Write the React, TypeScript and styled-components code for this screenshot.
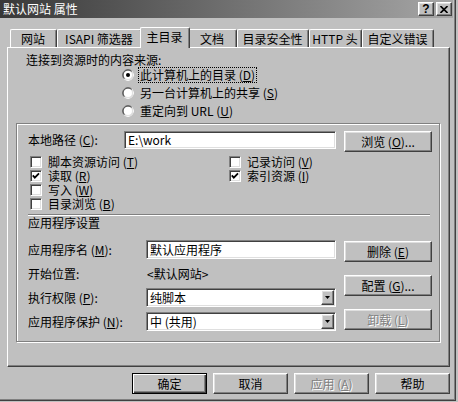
import React from 'react';
import styled, { createGlobalStyle, css } from 'styled-components';

const GlobalStyle = createGlobalStyle`
  * { box-sizing: border-box; }
  html, body { margin: 0; padding: 0; background: #c0c0c0; }
  body {
    font-family: "Noto Sans CJK SC", "Noto Sans", sans-serif;
    font-size: 12px;
    line-height: 14px;
    color: #000;
  }
  u { text-decoration-thickness: 1px; text-underline-offset: 1px; }
`;

const raised = css`
  border: 1px solid;
  border-color: #fff #404040 #404040 #fff;
  box-shadow: inset -1px -1px 0 #808080, inset 1px 1px 0 #dfdfdf;
`;

const sunken = css`
  border: 1px solid;
  border-color: #808080 #fff #fff #808080;
  box-shadow: inset 1px 1px 0 #404040, inset -1px -1px 0 #dfdfdf;
`;

const Window = styled.div`
  width: 456px;
  height: 401px;
  padding-right: 2px;
  background: #c0c0c0;
  border-right: 1px solid #404040;
  border-bottom: 1px solid #404040;
  box-shadow: inset -1px -1px 0 #808080;
  display: flex;
  flex-direction: column;
`;

const TitleBar = styled.div`
  height: 18px;
  padding: 0 1px 0 3px;
  display: flex;
  align-items: center;
  justify-content: space-between;
  background: linear-gradient(to right, #383838, #a6a6a6);
`;

const Title = styled.span`
  color: #fff;
  line-height: 18px;
`;

const CaptionButtons = styled.div`
  display: flex;
  gap: 2px;
`;

const CaptionButton = styled.div`
  ${raised};
  width: 16px;
  height: 14px;
  background: #c0c0c0;
  display: flex;
  align-items: center;
  justify-content: center;
  font-family: "Liberation Sans", sans-serif;
  font-weight: bold;
  font-size: 12px;
  line-height: 12px;
`;

const Body = styled.div`
  padding: 9px 0 0 7px;
  display: flex;
  flex-direction: column;
`;

const TabStrip = styled.div`
  height: 20px;
  padding-left: 3px;
  display: flex;
  align-items: flex-end;
`;

const Tab = styled.div<{ $width: number; $active?: boolean }>`
  position: relative;
  width: ${(p) => p.$width + (p.$active ? 4 : 0)}px;
  height: ${(p) => (p.$active ? 21 : 18)}px;
  margin: 0 ${(p) => (p.$active ? -2 : 0)}px ${(p) => (p.$active ? -1 : 0)}px;
  padding: 0 1px ${(p) => (p.$active ? 3 : 0)}px 0;
  z-index: ${(p) => (p.$active ? 1 : 0)};
  display: flex;
  align-items: center;
  justify-content: center;
  white-space: nowrap;
  background: #c0c0c0;
  border-left: 1px solid #fff;
  border-top: 1px solid #fff;
  border-right: 1px solid #404040;
  border-radius: 2px 2px 0 0;
  box-shadow: inset -1px 0 0 #808080;
`;

const Panel = styled.div`
  width: 443px;
  height: 320px;
  padding: 5px 0 0 8px;
  border: 1px solid;
  border-color: #fff #404040 #404040 #fff;
  box-shadow: inset -1px -1px 0 #808080;
  display: flex;
  flex-direction: column;
`;

const Heading = styled.div`
  margin-left: 10px;
  height: 13px;
  line-height: 13px;
`;

const RadioList = styled.div`
  margin-left: 106px;
  display: flex;
  flex-direction: column;
`;

const OptionRow = styled.div`
  height: 18px;
  display: flex;
  align-items: center;
  gap: 4px;
  white-space: nowrap;
`;

const FocusLabel = styled.span<{ $focus?: boolean }>`
  padding: 0 1px;
  line-height: 14px;
  border: 1px dotted ${(p) => (p.$focus ? '#000' : 'transparent')};
`;

const Frame = styled.div`
  margin-top: 3px;
  width: 424px;
  height: 219px;
  padding: 7px 7px 0 11px;
  border: 1px solid #808080;
  box-shadow: inset 1px 1px 0 #fff, 1px 1px 0 #fff;
  display: flex;
  flex-direction: column;
`;

const PathRow = styled.div`
  display: flex;
  align-items: flex-start;
  gap: 8px;
`;

const FieldLabel = styled.span<{ $w: number }>`
  width: ${(p) => p.$w}px;
  flex: none;
  white-space: nowrap;
`;

const PathLabel = styled(FieldLabel)`
  height: 18px;
  line-height: 18px;
  margin-right: -8px;
`;

const TextBox = styled.div<{ $w: number; $h: number }>`
  ${sunken};
  width: ${(p) => p.$w}px;
  height: ${(p) => p.$h}px;
  background: #fff;
  padding-left: 3px;
  display: flex;
  align-items: center;
  white-space: nowrap;
`;

const Button = styled.div<{ $w: number; $disabled?: boolean }>`
  ${raised};
  width: ${(p) => p.$w}px;
  height: 21px;
  flex: none;
  background: #c0c0c0;
  display: flex;
  align-items: center;
  justify-content: center;
  white-space: nowrap;
  color: ${(p) => (p.$disabled ? '#808080' : '#000')};
  text-shadow: ${(p) => (p.$disabled ? '1px 1px 0 #fff' : 'none')};
`;

const DefaultButton = styled(Button)`
  border-color: #000;
  box-shadow: inset 1px 1px 0 #fff, inset -1px -1px 0 #404040, inset -2px -2px 0 #808080;
`;

const CheckGrid = styled.div`
  margin-top: 3px;
  padding-left: 2px;
  display: grid;
  grid-template-columns: 199px auto;
  grid-auto-rows: 14px;
`;

const CheckCell = styled.div`
  display: flex;
  align-items: center;
  gap: 6px;
  white-space: nowrap;
  line-height: 14px;
`;

const Box = styled.div`
  ${sunken};
  width: 12px;
  height: 12px;
  background: #fff;
  display: flex;
  align-items: center;
  justify-content: center;
`;

const Separator = styled.div`
  margin-top: 3px;
  width: 402px;
  height: 2px;
  border-top: 1px solid #808080;
  border-bottom: 1px solid #fff;
`;

const SectionTitle = styled.div`
  height: 14px;
  line-height: 14px;
`;

const AppArea = styled.div`
  margin-top: 10px;
  display: flex;
  gap: 8px;
`;

const FieldColumn = styled.div`
  display: flex;
  flex-direction: column;
`;

const FieldRow = styled.div<{ $h: number; $gap?: number }>`
  height: ${(p) => p.$h}px;
  margin-top: ${(p) => p.$gap ?? 0}px;
  display: flex;
  align-items: center;
`;

const PlainValue = styled.span`
  padding-left: 1px;
`;

const Select = styled(TextBox)`
  justify-content: space-between;
  padding-right: 1px;
`;

const ArrowButton = styled.div`
  ${raised};
  width: 13px;
  height: 15px;
  background: #c0c0c0;
  display: flex;
  align-items: center;
  justify-content: center;
`;

const ButtonColumn = styled.div`
  padding-top: 1px;
  display: flex;
  flex-direction: column;
  gap: 13px;
`;

const DialogButtons = styled.div`
  margin: 6px 0 0 125px;
  display: flex;
  gap: 6px;
`;

const RadioIcon: React.FC<{ checked?: boolean }> = ({ checked }) => (
  <svg width="12" height="12" viewBox="0 0 12 12">
    <circle cx="6" cy="6" r="5.5" fill="#fff" stroke="#808080" />
    <path d="M9.9 2.1 A5.5 5.5 0 0 1 2.1 9.9" fill="none" stroke="#fff" />
    <path d="M2.5 9.5 A4.5 4.5 0 0 1 9.5 2.5" fill="none" stroke="#404040" />
    <path d="M9.2 2.8 A4.5 4.5 0 0 1 2.8 9.2" fill="none" stroke="#dfdfdf" />
    {checked && <circle cx="6" cy="6" r="2" fill="#000" />}
  </svg>
);

const Check: React.FC<{ checked?: boolean; label: React.ReactNode }> = ({ checked, label }) => (
  <CheckCell>
    <Box>
      {checked && (
        <svg width="8" height="8" viewBox="0 0 8 8">
          <polyline points="0.8,3.4 2.8,5.6 7,1.4" fill="none" stroke="#000" strokeWidth="1.8" />
        </svg>
      )}
    </Box>
    <span>{label}</span>
  </CheckCell>
);

const Arrow = () => (
  <ArrowButton>
    <svg width="5" height="3" viewBox="0 0 5 3">
      <polygon points="0,0 5,0 2.5,3" fill="#000" />
    </svg>
  </ArrowButton>
);

const tabs = [
  { label: '网站', w: 47 },
  { label: 'ISAPI 筛选器', w: 85 },
  { label: '主目录', w: 46, active: true },
  { label: '文档', w: 49 },
  { label: '目录安全性', w: 72 },
  { label: 'HTTP 头', w: 53 },
  { label: '自定义错误', w: 72 },
];

const App: React.FC = () => (
  <>
    <GlobalStyle />
    <Window>
      <TitleBar>
        <Title>默认网站 属性</Title>
        <CaptionButtons>
          <CaptionButton>?</CaptionButton>
          <CaptionButton>
            <svg width="8" height="7" viewBox="0 0 8 7">
              <path d="M0.5 0 L7.5 7 M7.5 0 L0.5 7" stroke="#000" strokeWidth="1.6" />
            </svg>
          </CaptionButton>
        </CaptionButtons>
      </TitleBar>
      <Body>
        <TabStrip>
          {tabs.map((t) => (
            <Tab key={t.label} $width={t.w} $active={t.active}>
              {t.label}
            </Tab>
          ))}
        </TabStrip>
        <Panel>
          <Heading>连接到资源时的内容来源:</Heading>
          <RadioList>
            <OptionRow>
              <RadioIcon checked />
              <FocusLabel $focus>
                此计算机上的目录 (<u>D</u>)
              </FocusLabel>
            </OptionRow>
            <OptionRow>
              <RadioIcon />
              <FocusLabel>
                另一台计算机上的共享 (<u>S</u>)
              </FocusLabel>
            </OptionRow>
            <OptionRow>
              <RadioIcon />
              <FocusLabel>
                重定向到 URL (<u>U</u>)
              </FocusLabel>
            </OptionRow>
          </RadioList>
          <Frame>
            <PathRow>
              <PathLabel $w={96}>
                本地路径 (<u>C</u>):
              </PathLabel>
              <TextBox $w={212} $h={18}>E:\work</TextBox>
              <Button $w={88}>
                浏览 (<u>O</u>)...
              </Button>
            </PathRow>
            <CheckGrid>
              <Check label={<>脚本资源访问 (<u>T</u>)</>} />
              <Check label={<>记录访问 (<u>V</u>)</>} />
              <Check checked label={<>读取 (<u>R</u>)</>} />
              <Check checked label={<>索引资源 (<u>I</u>)</>} />
              <Check label={<>写入 (<u>W</u>)</>} />
              <span />
              <Check label={<>目录浏览 (<u>B</u>)</>} />
            </CheckGrid>
            <Separator />
            <SectionTitle>应用程序设置</SectionTitle>
            <AppArea>
              <FieldColumn>
                <FieldRow $h={19}>
                  <FieldLabel $w={118}>
                    应用程序名 (<u>M</u>):
                  </FieldLabel>
                  <TextBox $w={190} $h={19}>默认应用程序</TextBox>
                </FieldRow>
                <FieldRow $h={29}>
                  <FieldLabel $w={118}>开始位置:</FieldLabel>
                  <PlainValue>&lt;默认网站&gt;</PlainValue>
                </FieldRow>
                <FieldRow $h={19}>
                  <FieldLabel $w={118}>
                    执行权限 (<u>P</u>):
                  </FieldLabel>
                  <Select $w={190} $h={19}>
                    纯脚本
                    <Arrow />
                  </Select>
                </FieldRow>
                <FieldRow $h={19} $gap={5}>
                  <FieldLabel $w={118}>
                    应用程序保护 (<u>N</u>):
                  </FieldLabel>
                  <Select $w={190} $h={19}>
                    中 (共用)
                    <Arrow />
                  </Select>
                </FieldRow>
              </FieldColumn>
              <ButtonColumn>
                <Button $w={88}>
                  删除 (<u>E</u>)
                </Button>
                <Button $w={88}>
                  配置 (<u>G</u>)...
                </Button>
                <Button $w={88} $disabled>
                  卸载 (<u>L</u>)
                </Button>
              </ButtonColumn>
            </AppArea>
          </Frame>
        </Panel>
        <DialogButtons>
          <DefaultButton $w={75}>确定</DefaultButton>
          <Button $w={75}>取消</Button>
          <Button $w={75} $disabled>
            应用 (<u>A</u>)
          </Button>
          <Button $w={75}>帮助</Button>
        </DialogButtons>
      </Body>
    </Window>
  </>
);

export default App;
